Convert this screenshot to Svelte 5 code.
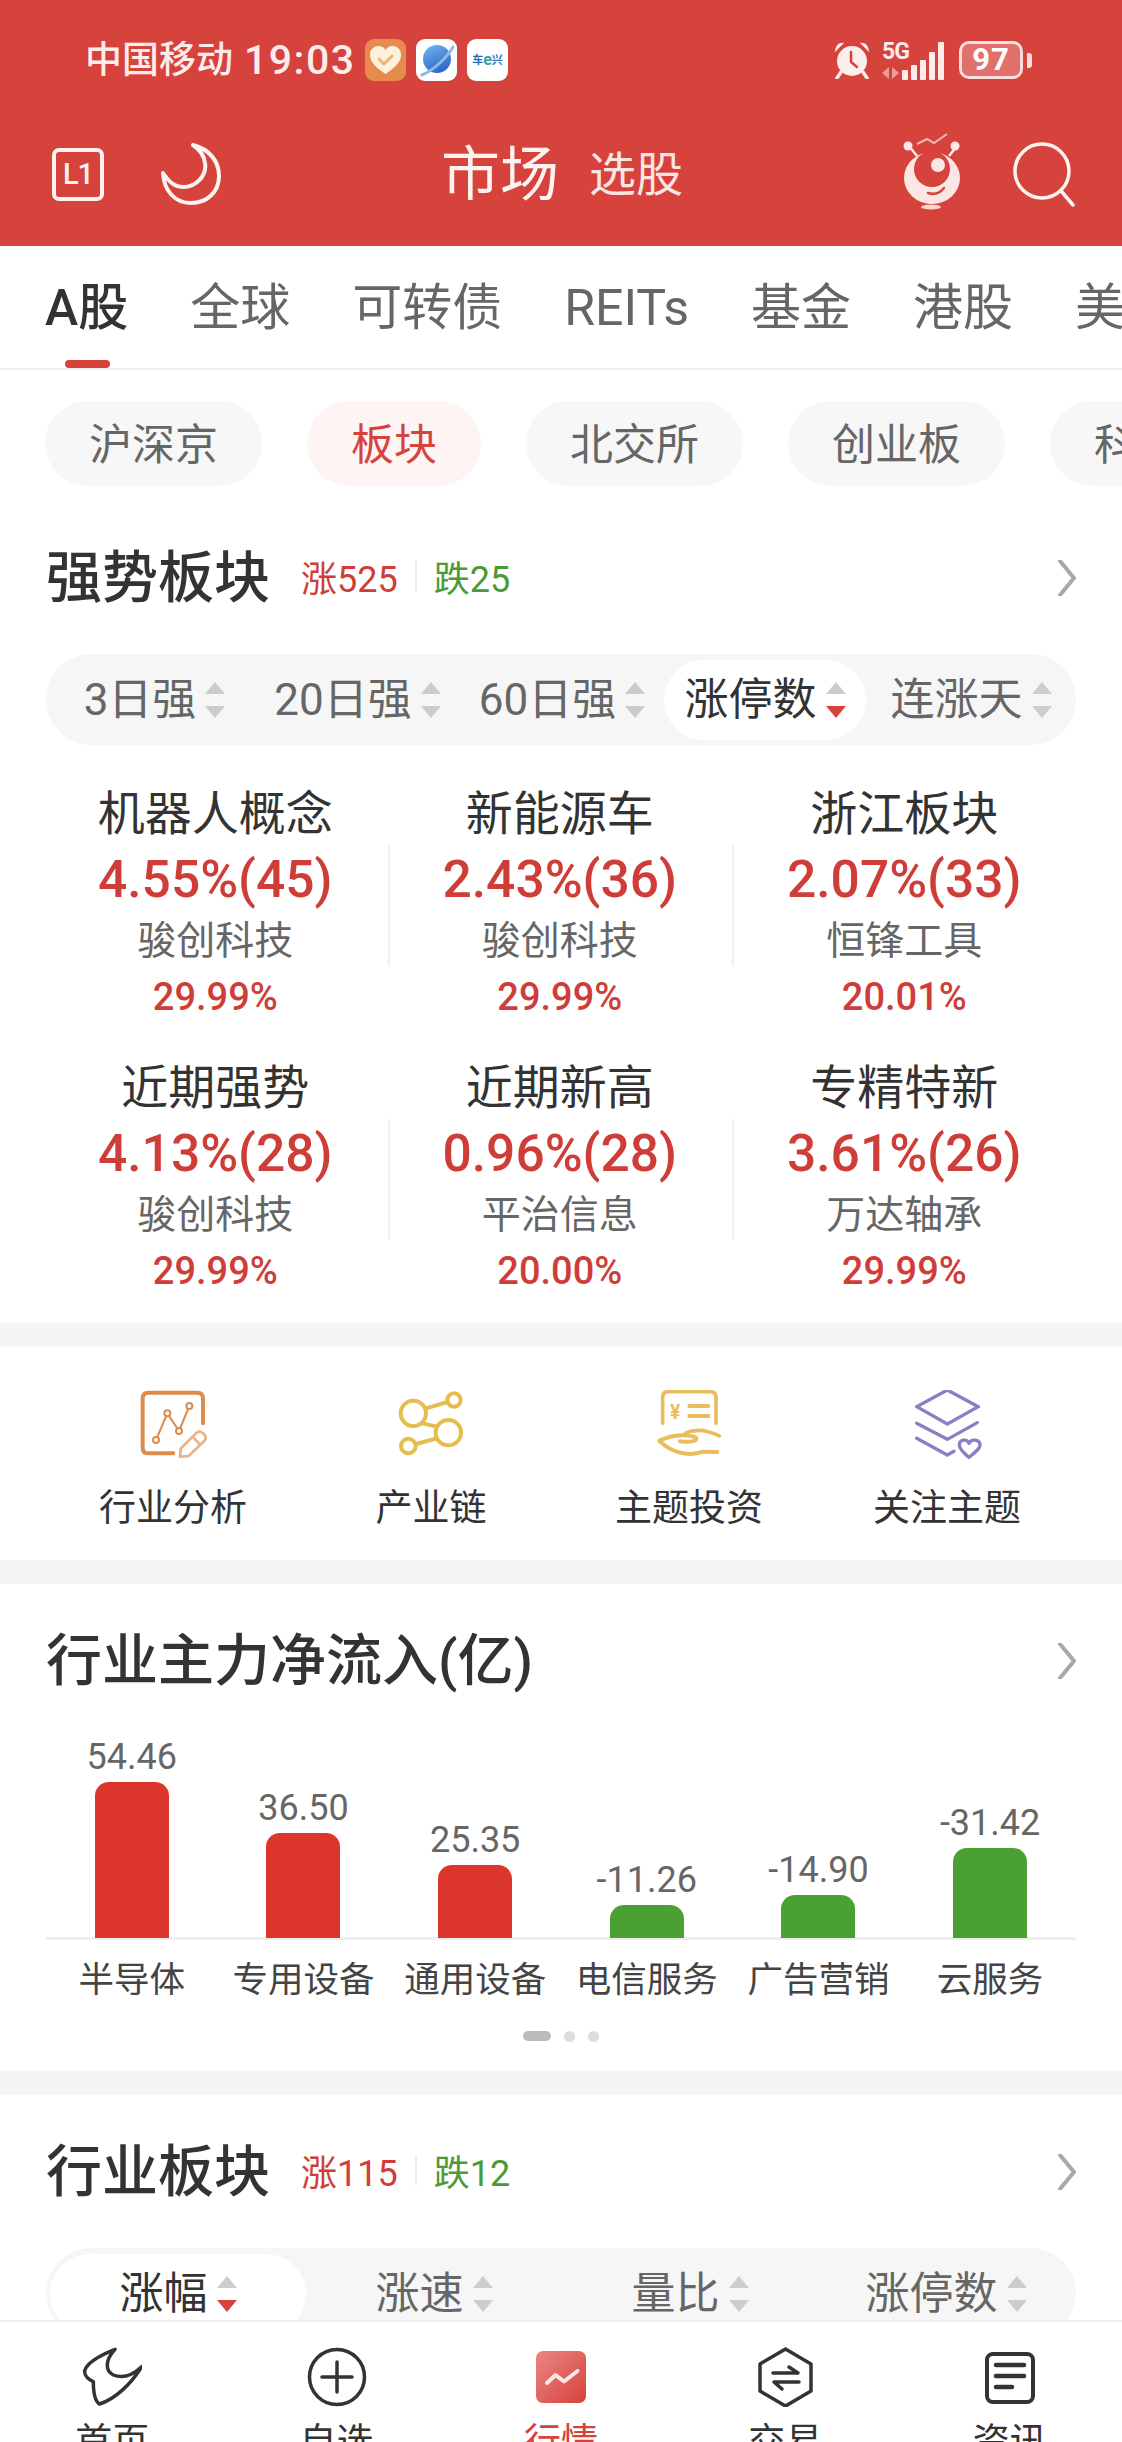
<script>
  const tabs = ['A股', '全球', '可转债', 'REITs', '基金', '港股', '美股'];
  const pills = ['沪深京', '板块', '北交所', '创业板', '科创板'];
  const sort1 = ['3日强', '20日强', '60日强', '涨停数', '连涨天'];
  const sort2 = ['涨幅', '涨速', '量比', '涨停数'];
  const cells = [
    ['机器人概念', '4.55%(45)', '骏创科技', '29.99%'],
    ['新能源车', '2.43%(36)', '骏创科技', '29.99%'],
    ['浙江板块', '2.07%(33)', '恒锋工具', '20.01%'],
    ['近期强势', '4.13%(28)', '骏创科技', '29.99%'],
    ['近期新高', '0.96%(28)', '平治信息', '20.00%'],
    ['专精特新', '3.61%(26)', '万达轴承', '29.99%']
  ];
  const bars = [
    ['54.46', 156, 'up', '半导体'],
    ['36.50', 105, 'up', '专用设备'],
    ['25.35', 73, 'up', '通用设备'],
    ['-11.26', 33, 'down', '电信服务'],
    ['-14.90', 43, 'down', '广告营销'],
    ['-31.42', 90, 'down', '云服务']
  ];
</script>

{#snippet arrows(active)}
  <span class="arrows"><i class="tri-up"></i><i class="tri-down" class:on={active}></i></span>
{/snippet}

{#snippet chevron()}
  <svg class="chev" viewBox="0 0 18 36" width="18" height="36"><path d="M2 1 L16 18 L2 35" fill="none" stroke="#a8a8a8" stroke-width="4" stroke-linecap="round" stroke-linejoin="round"/></svg>
{/snippet}

<div class="screen">
  <div class="scroll">
    <header class="head">
      <div class="status">
        <span class="carrier">中国移动</span>
        <span class="clock">19:03</span>
        <span class="app orange">
          <svg viewBox="0 0 41 42" width="41" height="42"><path d="M20.5 35 C8 27 5 21 5 15.500 C5 10 9.500 7 13.500 7 C16.500 7 19 8.500 20.500 11 C22 8.500 24.500 7 27.500 7 C31.500 7 36 10 36 15.500 C36 21 33 27 20.500 35Z" fill="#fdf1dd"/><path d="M14 20 L19 25 L27 17" fill="none" stroke="#e9b877" stroke-width="3" stroke-linecap="round" stroke-linejoin="round"/></svg>
        </span>
        <span class="app">
          <svg viewBox="0 0 41 42" width="41" height="42"><defs><linearGradient id="pl" x1="0.2" y1="0" x2="0.7" y2="1"><stop offset="0" stop-color="#6fb0ec"/><stop offset="1" stop-color="#2a63c4"/></linearGradient></defs><circle cx="21" cy="20" r="14" fill="url(#pl)"/><path d="M6 36 C16 32 30 20 37 8" fill="none" stroke="#8fb8ea" stroke-width="3" stroke-linecap="round"/></svg>
        </span>
        <span class="app cx"><b>车</b><em>e</em><b class="g">兴</b></span>

        <span class="status-right">
          <svg class="alarm" viewBox="0 0 38 38" width="38" height="38">
            <circle cx="19" cy="20" r="15" fill="#fdeeee"/>
            <path d="M2 11 C2 4 7 1 11 2 Z M36 11 C36 4 31 1 27 2 Z" fill="#fdeeee"/>
            <path d="M8 31 L4 37 M30 31 L34 37" stroke="#fdeeee" stroke-width="3.500" stroke-linecap="round"/>
            <path d="M18 11 V21 L24 26" fill="none" stroke="#d6423c" stroke-width="2.500" stroke-linecap="round" stroke-linejoin="round"/>
          </svg>
          <span class="net">
            <span class="fiveg">5G</span>
            <svg class="updown" viewBox="0 0 18 12" width="18" height="12"><path d="M0 6 L7 0 V12Z M10 0 L17 6 L10 12Z" fill="#ee9a96"/></svg>
          </span>
          <span class="sig">
            <i style="height:10px"></i><i style="height:15px"></i><i style="height:20px"></i><i style="height:28px"></i><i style="height:38px"></i>
          </span>
          <span class="batt"><span class="batt-body">97</span><i class="nub"></i></span>
        </span>
      </div>
      <div class="nav">
        <span class="l1">L1</span>
        <svg class="moon" viewBox="0 0 60 62" width="60" height="62">
          <path d="M32 2 C48 6 58 18 58 33 C58 49 46 60 30 60 C14 60 3 48 2 30 C10 42 16 44 22 44 C36 44 46 32 44 20 C43 12 38 6 32 2 Z" fill="none" stroke="#fff3f1" stroke-width="4" stroke-linejoin="round"/>
        </svg>
        <span class="nav-title"><span class="t1">市场</span><span class="t2">选股</span></span>
        <svg class="robot" viewBox="0 0 60 78" width="60" height="78">
          <path d="M14 12 L24 7 L31 11 L44 2" fill="none" stroke="#f6b9b3" stroke-width="2"/>
          <path d="M6 14 L14 24 M54 14 L46 24" stroke="#fce9e7" stroke-width="2.500"/>
          <circle cx="5" cy="14" r="4.500" fill="#fce9e7"/><circle cx="52" cy="14" r="4.500" fill="#fce9e7"/>
          <ellipse cx="29" cy="46" rx="28" ry="26" fill="#fbe6e3"/>
          <circle cx="29" cy="37" r="18" fill="#d6423c"/>
          <circle cx="35" cy="33" r="7" fill="#fbe6e3"/>
          <path d="M25 61 C31 63 37 61 41 56" fill="none" stroke="#d6423c" stroke-width="2.500" stroke-linecap="round"/>
          <ellipse cx="28" cy="75" rx="10" ry="2.500" fill="#fbd4cf"/>
        </svg>
        <svg class="search" viewBox="0 0 64 66" width="64" height="66">
          <circle cx="29" cy="29" r="27" fill="none" stroke="#fff3f1" stroke-width="3.500"/>
          <path d="M49 50 L60 63" stroke="#fff3f1" stroke-width="3.500" stroke-linecap="round"/>
        </svg>
      </div>
    </header>

    <nav class="tabs">
      {#each tabs as t, i}
        <span class="tab" class:on={i === 0}>{t}</span>
      {/each}
    </nav>

    <div class="pills">
      {#each pills as p, i}
        <span class="pill" class:on={i === 1}>{p}</span>
      {/each}
    </div>

    <div class="sec-head">
      <span class="sec-title">强势板块</span>
      <span class="count"><span class="up">涨525</span><i class="sep"></i><span class="down">跌25</span></span>
      {@render chevron()}
    </div>

    <div class="sort five">
      {#each sort1 as s, i}
        <span class="sort-item" class:on={i === 3}>{s}{@render arrows(i === 3)}</span>
      {/each}
    </div>

    <div class="grid">
      {#each cells as c, i}
        <div class="cell" class:ruled={i % 3 !== 0}>
          <div class="c-name">{c[0]}</div>
          <div class="c-val">{c[1]}</div>
          <div class="c-sub">{c[2]}</div>
          <div class="c-pct">{c[3]}</div>
        </div>
      {/each}
    </div>

    <div class="band"></div>

    <div class="features">
      <div class="feat">
        <svg viewBox="54 60 210 210" width="70" height="70">
          <g fill="none" stroke="#dd8c4c" stroke-linecap="round" stroke-linejoin="round">
            <path d="M160 250 H85 Q68 250 68 233 V85 Q68 68 85 68 H232 Q249 68 249 85 V160" stroke-width="12"/>
            <path d="M108 210 L142 130 L177 183 L208 108" stroke-width="6"/>
            <circle cx="108" cy="210" r="9" fill="#fff" stroke-width="6"/>
            <circle cx="142" cy="130" r="9" fill="#fff" stroke-width="6"/>
            <circle cx="177" cy="183" r="9" fill="#fff" stroke-width="6"/>
            <circle cx="208" cy="108" r="9" fill="#fff" stroke-width="6"/>
            <path d="M182 236 L230 188 Q240 180 252 192 Q262 204 252 214 L206 258 L180 260 Z M218 200 L240 224" stroke="#e9b184" stroke-width="8"/>
          </g>
        </svg>
        <span>行业分析</span>
      </div>
      <div class="feat">
        <svg viewBox="828 60 210 210" width="70" height="70">
          <g fill="none" stroke="#e5bd4e" stroke-width="12" stroke-linecap="round">
            <circle cx="880" cy="130" r="38"/><circle cx="1002" cy="90" r="20"/>
            <circle cx="985" cy="188" r="38"/><circle cx="865" cy="228" r="22"/>
            <path d="M918 115 L982 96 M908 160 L950 170 M888 222 L948 206"/>
          </g>
        </svg>
        <span>产业链</span>
      </div>
      <div class="feat">
        <svg viewBox="102 60 210 210" width="70" height="70">
          <g fill="none" stroke="#e8bd5c" stroke-linecap="round" stroke-linejoin="round">
            <path d="M128 160 V82 Q128 65 145 65 H270 Q288 65 288 82 V160" stroke-width="11"/>
            <path d="M208 108 H265 M208 138 H265" stroke-width="12"/>
            <path d="M195 190 C220 178 250 175 298 198" stroke-width="11"/>
            <path d="M118 212 C150 198 180 190 222 200 C240 206 225 220 180 214 M118 212 C150 245 200 262 250 245 L292 246" stroke-width="12"/>
          </g>
          <text x="150" y="146" fill="#e8bd5c" font-size="58" font-family="Roboto" font-weight="700">¥</text>
        </svg>
        <span>主题投资</span>
      </div>
      <div class="feat">
        <svg viewBox="876 60 210 210" width="70" height="70">
          <g fill="none" stroke="#8a7fc7" stroke-width="10" stroke-linecap="round" stroke-linejoin="round">
            <path d="M982 60 L1075 110 L982 162 L890 110 Z"/>
            <path d="M890 160 L982 208 L1072 158"/>
            <path d="M890 205 L982 255 L1002 244"/>
            <path d="M1047 262 C1026 245 1018 236 1018 226 C1018 208 1040 205 1047 220 C1054 205 1080 208 1080 226 C1080 236 1068 245 1047 262Z"/>
          </g>
        </svg>
        <span>关注主题</span>
      </div>
    </div>

    <div class="band"></div>

    <div class="sec-head">
      <span class="sec-title">行业主力净流入(亿)</span>
      {@render chevron()}
    </div>

    <div class="chart">
      {#each bars as b}
        <div class="col">
          <span class="b-val">{b[0]}</span>
          <i class="bar {b[2]}" style="height:{b[1]}px"></i>
        </div>
      {/each}
    </div>
    <div class="chart-labels">
      {#each bars as b}
        <span>{b[3]}</span>
      {/each}
    </div>
    <div class="dots"><i class="long"></i><i></i><i></i></div>

    <div class="band"></div>

    <div class="sec-head">
      <span class="sec-title">行业板块</span>
      <span class="count"><span class="up">涨115</span><i class="sep"></i><span class="down">跌12</span></span>
      {@render chevron()}
    </div>

    <div class="sort four">
      {#each sort2 as s, i}
        <span class="sort-item" class:on={i === 0}>{s}{@render arrows(i === 0)}</span>
      {/each}
    </div>
  </div>

  <footer class="tabbar">
    <div class="tb">
      <svg viewBox="66 51 180 180" width="60" height="60"><path d="M165 58 C130 72 82 95 74 122 C72 138 88 150 100 155 C100 180 104 212 118 222 C165 208 215 160 245 110 C215 138 185 145 160 135 C135 122 135 90 165 58 Z" fill="none" stroke="#333" stroke-width="10.500" stroke-linejoin="round"/></svg>
      <span>首页</span>
    </div>
    <div class="tb">
      <svg viewBox="0 0 60 60" width="60" height="60"><circle cx="30" cy="30" r="27.500" fill="none" stroke="#333" stroke-width="3.500"/><path d="M15 30 H45 M30 15 V45" stroke="#333" stroke-width="3.500" stroke-linecap="round"/></svg>
      <span>自选</span>
    </div>
    <div class="tb on">
      <svg viewBox="0 0 60 60" width="60" height="60"><defs><linearGradient id="hq" x1="0" y1="0" x2="1" y2="1"><stop offset="0" stop-color="#e98784"/><stop offset="1" stop-color="#d6423c"/></linearGradient></defs><rect x="5" y="4" width="50" height="52" rx="7" fill="url(#hq)"/><path d="M16 36 L24.500 28 L33 34.500 L46.500 24" fill="none" stroke="#fde9e7" stroke-width="4" stroke-linecap="round" stroke-linejoin="round"/></svg>
      <span>行情</span>
    </div>
    <div class="tb">
      <svg viewBox="0 0 60 60" width="60" height="60"><path d="M30.500 2 L56 17 V44 L30.500 59 L5 44 V17 Z" fill="none" stroke="#333" stroke-width="3.500" stroke-linejoin="round"/><path d="M18 26 H43 L34 20 M44 35 H19 L27 42" fill="none" stroke="#333" stroke-width="3.500" stroke-linecap="round" stroke-linejoin="round"/></svg>
      <span>交易</span>
    </div>
    <div class="tb">
      <svg viewBox="0 0 60 60" width="60" height="60"><rect x="7" y="7" width="46" height="48" rx="6" fill="none" stroke="#333" stroke-width="4"/><path d="M16 18 H44 M16 29 H44 M16 40 H32" stroke="#333" stroke-width="4.500" stroke-linecap="round"/></svg>
      <span>资讯</span>
    </div>
  </footer>
</div>

<style>
  :global(body) { margin: 0; background: #fff; }
  .screen {
    width: 1122px; height: 2442px; overflow: hidden;
    display: flex; flex-direction: column;
    font-family: Roboto, "Noto Sans CJK SC", sans-serif;
    color: #333; background: #fff;
  }
  .scroll { flex: 1; min-height: 0; overflow: hidden; }
  i, em { font-style: normal; display: block; }

  .head { height: 246px; background: #d6423c; color: #fff; }
  .status { height: 118px; box-sizing: border-box; padding: 2px 0 0 85px; display: flex; align-items: center; color: #fdecea; }
  .carrier { font-size: 37px; line-height: 1; font-weight: 500; }
  .clock { font-size: 41px; line-height: 1; margin-left: 11px; margin-right: 11px; font-weight: 500; width: 110px; letter-spacing: 1.500px; white-space: nowrap; }
  .app { width: 41px; height: 42px; border-radius: 9px; background: #fff; margin-right: 10px; display: flex; align-items: center; justify-content: center; overflow: hidden; }
  .orange { background: #e68a4e; }
  .cx { font-size: 11px; line-height: 1; color: #2b6cb0; font-weight: 700; }
  .cx b { font-weight: 700; }
  .cx em { color: #3aa0a0; font-size: 16px; }
  .cx .g { color: #2f7fbf; }
  .status-right { margin-left: 315px; display: flex; align-items: center; height: 38px; }
  .net { width: 28px; height: 38px; margin-left: 11px; display: flex; flex-direction: column; justify-content: space-between; }
  .fiveg { font-size: 23px; line-height: 21px; font-weight: 700; letter-spacing: -1px; color: #fdecea; }
  .sig { display: flex; align-items: flex-end; gap: 3px; height: 39px; margin-left: -8px; }
  .sig i { width: 6px; background: #fdecea; border-radius: 1px; }
  .batt { display: flex; align-items: center; margin-left: 15px; }
  .batt-body {
    width: 64px; height: 38px; box-sizing: border-box; border: 3.500px solid #fbdedb; border-radius: 10px;
    background: #e0706b; background-clip: padding-box; color: #fff;
    font-size: 31px; font-weight: 700; line-height: 31px; text-align: center; letter-spacing: 1px;
  }
  .nub { width: 5px; height: 15px; margin-left: 4px; background: #fbdedb; border-radius: 0 3px 3px 0; }

  .nav { height: 114px; display: flex; align-items: center; padding: 0 45px 0 52px; }
  .l1 {
    width: 52px; height: 53px; box-sizing: border-box; border: 4px solid #fff3f1; border-radius: 7px;
    font-size: 29px; font-weight: 500; line-height: 45px; text-align: center; color: #fff3f1; margin-top: -2px; letter-spacing: -1px;
  }
  .moon { margin-left: 57px; margin-top: -3px; }
  .nav-title { margin-left: 220px; display: flex; align-items: center; }
  .t1 { font-size: 59px; line-height: 70px; color: #fff3f1; }
  .t2 { font-size: 47px; line-height: 70px; color: #fce4e1; margin-left: 30px; }
  .robot { margin-left: auto; margin-top: -8px; }
  .search { margin-left: 50px; }

  .tabs { height: 124px; box-sizing: border-box; border-bottom: 2px solid #f1f1f1; padding-left: 45px; display: flex; gap: 62px; align-items: flex-start; white-space: nowrap; overflow: hidden; }
  .tab { font-size: 50px; height: 122px; line-height: 124px; color: #666; position: relative; flex: none; }
  .tab.on { color: #333; font-weight: 500; }
  .tab.on::after { content: ''; position: absolute; left: 20px; bottom: 0; width: 45px; height: 8px; border-radius: 4px; background: #d6423c; }

  .pills { margin-top: 31px; height: 85px; padding-left: 45px; display: flex; gap: 45px; overflow: hidden; }
  .pill { flex: none; height: 85px; line-height: 89px; padding: 0 44px; border-radius: 43px; background: #f7f7f7; font-size: 43px; color: #666; }
  .pill.on { background: #fdf4f3; color: #d6423c; }

  .sec-head { margin-top: 47px; height: 90px; padding: 0 46px; display: flex; align-items: center; }
  .band + .sec-head { margin-top: 32px; }
  .sec-title { font-size: 56px; line-height: 90px; color: #333; font-weight: 500; }
  .count { display: flex; align-items: center; font-size: 36px; margin-left: 31px; margin-top: -4px; }
  .up { color: #cf3d38; }
  .down { color: #4a9a35; }
  .sep { width: 2px; height: 30px; background: #eee; margin: 0 17px; }
  .chev { margin-left: auto; flex: none; }

  .sort { margin: 31px 46px 0; height: 91px; border-radius: 46px; background: #f6f6f6; display: grid; align-items: center; box-sizing: border-box; }
  .five { grid-template-columns: 201px 205px 204px 202px 210px; padding-left: 8px; }
  .four { grid-template-columns: repeat(4, 256px); padding-left: 4px; }
  .sort-item { display: flex; align-items: center; justify-content: center; gap: 9px; height: 80px; border-radius: 40px; font-size: 44px; color: #666; line-height: 80px; white-space: nowrap; }
  .sort-item.on { background: #fff; color: #333; }
  .arrows { display: flex; flex-direction: column; gap: 12px; flex: none; }
  .tri-up { width: 0; height: 0; border-left: 10px solid transparent; border-right: 10px solid transparent; border-bottom: 12px solid #ccc; }
  .tri-down { width: 0; height: 0; border-left: 10px solid transparent; border-right: 10px solid transparent; border-top: 12px solid #ccc; }
  .tri-down.on { border-top-color: #d6423c; }

  .grid { margin-top: 37px; padding: 0 45px 17px 43px; display: grid; grid-template-columns: repeat(3, 344.500px); row-gap: 24px; }
  .cell { height: 250px; text-align: center; position: relative; white-space: nowrap; }
  .cell.ruled::before { content: ''; position: absolute; left: 0; top: 63px; height: 121px; width: 2px; background: #f0f0f0; }
  .c-name { height: 60px; line-height: 63px; font-size: 47px; color: #333; }
  .c-val { height: 76px; line-height: 76px; font-size: 51.500px; color: #cf3d38; font-weight: 500; }
  .c-sub { height: 44px; line-height: 46px; font-size: 39px; color: #666; }
  .c-pct { height: 70px; line-height: 70px; font-size: 38px; color: #cf3d38; font-weight: 500; }

  .band { height: 24px; background: #f5f5f5; }

  .features { height: 213px; display: grid; grid-template-columns: repeat(4, 258px); padding-left: 44px; }
  .feat { display: flex; flex-direction: column; align-items: center; padding-top: 43px; }
  .feat span { margin-top: 24px; font-size: 37px; line-height: 50px; color: #333; }

  .chart { margin: 31px 46px 0; height: 200px; display: grid; grid-template-columns: repeat(6, 171.670px); border-bottom: 3px solid #eee; }
  .col { display: flex; flex-direction: column; align-items: center; justify-content: flex-end; }
  .b-val { font-size: 36px; line-height: 40px; margin-bottom: 5px; color: #666; }
  .bar { width: 74px; border-radius: 14px 14px 0 0; }
  .bar.up { background: #dc352b; }
  .bar.down { background: #4ba033; }
  .chart-labels { margin: 18px 46px 0; display: grid; grid-template-columns: repeat(6, 171.670px); text-align: center; font-size: 35.500px; line-height: 44px; color: #444; white-space: nowrap; }
  .dots { margin-top: 29px; height: 10px; padding-bottom: 30px; display: flex; justify-content: center; align-items: center; gap: 13px; }
  .dots i { width: 11px; height: 11px; border-radius: 50%; background: #ddd; }
  .dots i.long { width: 28px; height: 10px; border-radius: 5px; background: #bbb; }

  .tabbar { flex: none; height: 122px; box-sizing: border-box; border-top: 2px solid #ececec; background: #fff; display: grid; grid-template-columns: repeat(5, 224.400px); overflow: hidden; }
  .tb { display: flex; flex-direction: column; align-items: center; padding-top: 25px; font-size: 37px; color: #333; }
  .tb span { display: block; line-height: 50px; margin-top: 11px; }
  .tb.on { color: #d6423c; }
</style>
